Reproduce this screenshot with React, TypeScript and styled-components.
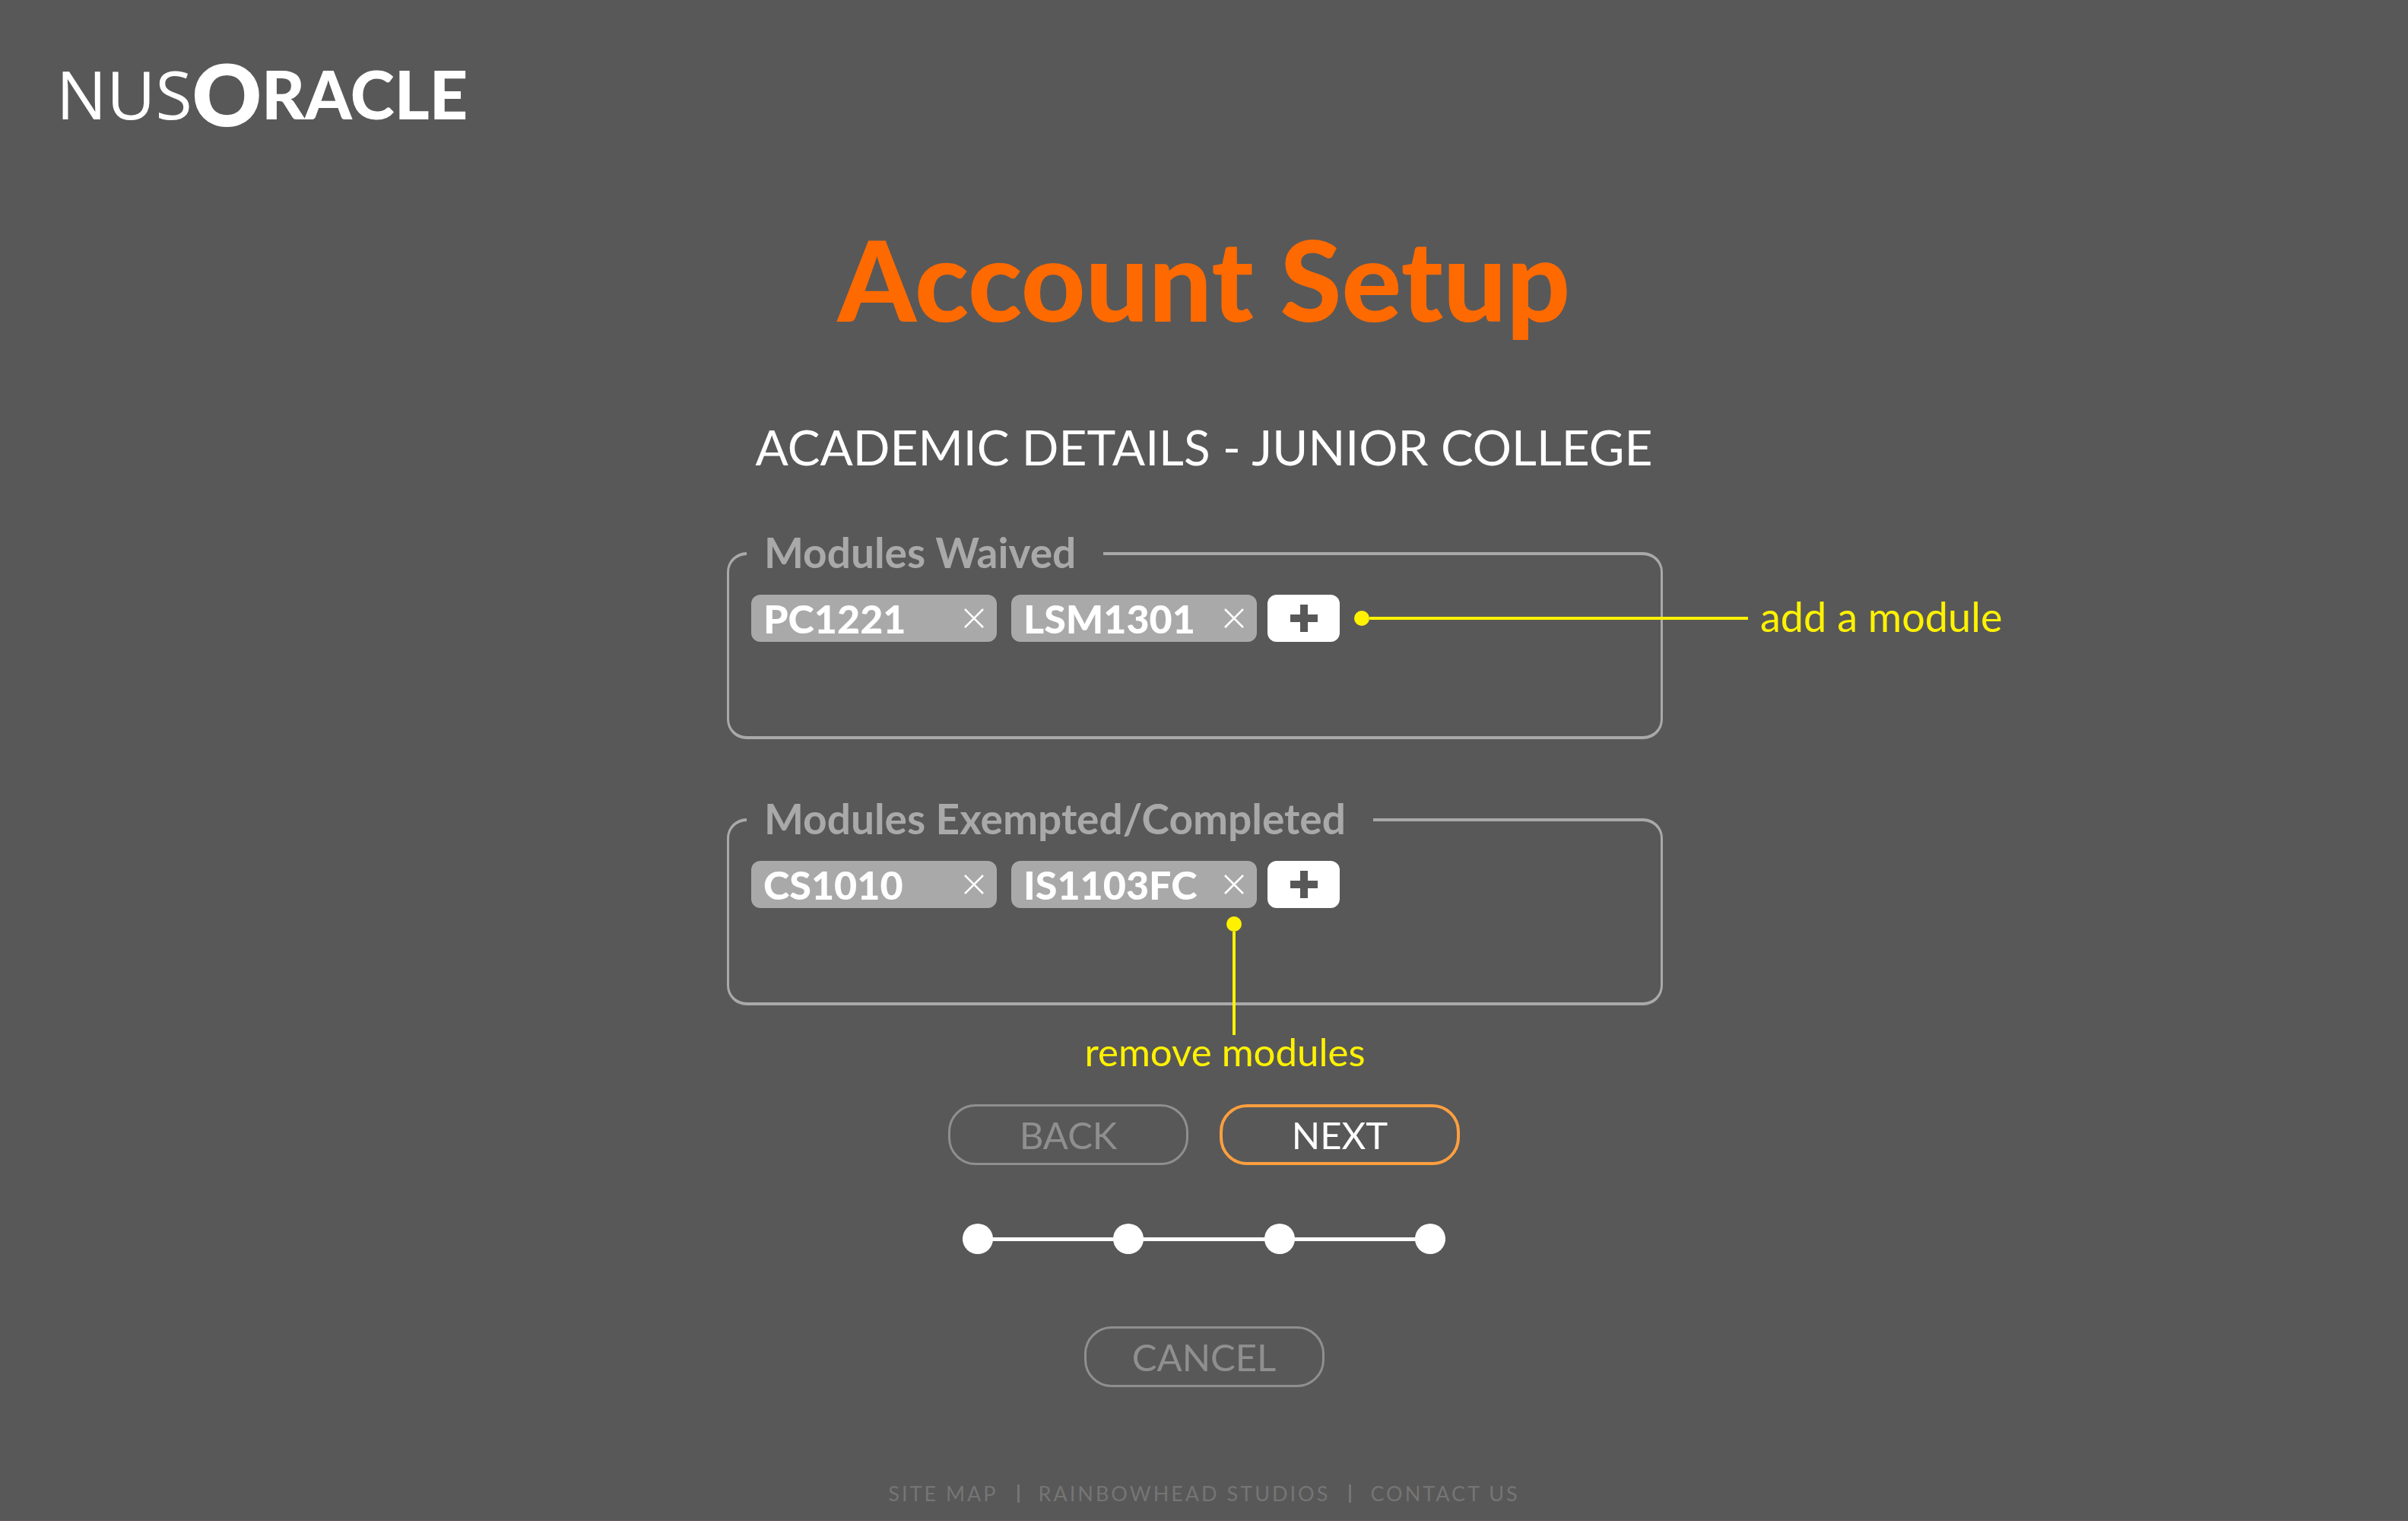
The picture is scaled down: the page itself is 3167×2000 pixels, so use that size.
import React, { useState } from "react";
import styled, { createGlobalStyle } from "styled-components";

const color = {
  page: "#585858",
  line: "#a9a9a9",
  muted: "#8f8f8f",
  footer: "#757575",
  brand: "#ff6a00",
  accent: "#ff9f3f",
  note: "#fff200",
};

const GlobalStyle = createGlobalStyle`
  *, *::before, *::after { box-sizing: border-box; }
  body {
    margin: 0;
    background: ${color.page};
    color: #fff;
    font-family: Lato, "Open Sans", sans-serif;
  }
  button { font-family: inherit; cursor: pointer; }
`;

const Page = styled.div`
  display: flex;
  flex-direction: column;
  min-height: 100vh;
  border-bottom: 1px solid #655b63;
`;

const Header = styled.header`
  padding: 66px 74px 0;
`;

const Logo = styled.a`
  display: inline-flex;
  align-items: center;
  height: 114px;
  color: #fff;
  line-height: 1;
  text-decoration: none;
`;

const LogoLight = styled.span`
  font: 400 88px/1 "Open Sans", sans-serif;
`;

const LogoRing = styled.span`
  font-size: 112px;
  font-weight: 800;
`;

const LogoHeavy = styled.span`
  font-size: 88px;
  font-weight: 900;
`;

const Main = styled.main`
  display: flex;
  flex-direction: column;
  align-items: center;
`;

const Title = styled.h1`
  margin: 98px 0 0;
  color: ${color.brand};
  font-size: 147px;
  font-weight: 900;
  line-height: 176px;
`;

const Subtitle = styled.h2`
  margin: 96px 0 0;
  font-size: 64px;
  font-weight: 400;
  line-height: 76px;
`;

const Fields = styled.div`
  display: flex;
  flex-direction: column;
  gap: 71px;
  width: min(1231px, 100%);
  margin: 67px 24px 0 0;
`;

const Field = styled.fieldset`
  min-width: 0;
  min-height: 279px;
  margin: 0;
  padding: 19px 29px;
  border: solid ${color.line};
  border-width: 4px 3px;
  border-radius: 26px;
`;

const Legend = styled.legend`
  margin-left: -6px;
  padding: 0 36px 4px 23px;
  color: ${color.line};
  font-size: 55px;
  font-weight: 700;
  line-height: 66px;
`;

const Chips = styled.ul`
  display: flex;
  gap: 19px;
  margin: 0;
  padding: 0;
  list-style: none;
`;

const Chip = styled.li`
  display: flex;
  align-items: center;
  justify-content: space-between;
  width: 323px;
  height: 62px;
  padding: 0 12px 0 16px;
  border-radius: 12px;
  background: ${color.line};
  font-size: 52px;
  font-weight: 900;
  line-height: 62px;
`;

const AddItem = styled.li`
  position: relative;
  margin-left: -5px;
`;

const IconButton = styled.button`
  position: relative;
  display: grid;
  place-items: center;
  width: 36px;
  height: 62px;
  padding: 0;
  border: 0;
  background: none;
  color: #fff;
`;

const AddButton = styled(IconButton)`
  width: 95px;
  border-radius: 12px;
  background: #fff;
  color: ${color.page};
`;

const NoteDot = styled.span`
  flex: none;
  width: 20px;
  height: 20px;
  border-radius: 50%;
  background: ${color.note};
`;

const SideNote = styled.div`
  position: absolute;
  top: 0;
  left: 100%;
  display: flex;
  align-items: center;
  height: 62px;
  margin-left: 19px;
  color: ${color.note};
  font-size: 54px;
  white-space: nowrap;
  pointer-events: none;
`;

const SideLine = styled.span`
  width: 498px;
  height: 4px;
  margin-right: 16px;
  background: ${color.note};
`;

const SideText = styled.span`
  padding-bottom: 6px;
`;

const BelowNote = styled.div`
  position: absolute;
  top: 100%;
  left: 50%;
  display: flex;
  flex-direction: column;
  align-items: center;
  margin-top: 11px;
  transform: translateX(-50%);
  color: ${color.note};
  font-size: 51px;
  font-weight: 400;
  line-height: 60px;
  white-space: nowrap;
  pointer-events: none;
`;

const BelowLine = styled.span`
  width: 4px;
  height: 136px;
  margin-bottom: -8px;
  background: ${color.note};
`;

const BelowText = styled.span`
  width: 0;
  display: flex;
  justify-content: center;
  padding-right: 24px;
`;

const Actions = styled.div`
  display: flex;
  gap: 41px;
  margin-top: 130px;
`;

const PillButton = styled.button<{ $primary?: boolean }>`
  width: 316px;
  height: 80px;
  padding: 0;
  border: ${(p) => (p.$primary ? `4px solid ${color.accent}` : `3px solid ${color.muted}`)};
  border-radius: 36px;
  background: none;
  color: ${(p) => (p.$primary ? "#fff" : color.muted)};
  font-size: 49px;
  line-height: 60px;
`;

const Steps = styled.ol`
  display: flex;
  align-items: center;
  justify-content: space-between;
  width: 635px;
  margin: 77px 0 95px;
  padding: 0;
  list-style: none;
  background: linear-gradient(#fff, #fff) center / 100% 5px no-repeat;
`;

const Step = styled.li`
  width: 40px;
  height: 40px;
  border-radius: 50%;
  background: #fff;
`;

const Footer = styled.footer`
  display: flex;
  align-items: center;
  justify-content: center;
  gap: 25px;
  margin-top: auto;
  padding-bottom: 17px;
`;

const FooterLink = styled.a`
  color: ${color.footer};
  font-size: 27px;
  letter-spacing: 3px;
  line-height: 36px;
  text-decoration: none;
`;

const Divider = styled.span`
  width: 3px;
  height: 24px;
  background: ${color.footer};
`;

const Cross = () => (
  <svg width="26" height="26" viewBox="0 0 26 26" aria-hidden="true">
    <path d="M1 1 25 25M25 1 1 25" stroke="currentColor" strokeWidth="2.5" />
  </svg>
);

const Plus = () => (
  <svg width="36" height="36" viewBox="0 0 36 36" aria-hidden="true">
    <path d="M18 0V36M0 18H36" stroke="currentColor" strokeWidth="10" />
  </svg>
);

interface ModuleFieldProps {
  label: string;
  initial: string[];
  addNote?: string;
  removeNote?: string;
}

function ModuleField({ label, initial, addNote, removeNote }: ModuleFieldProps) {
  const [modules, setModules] = useState(initial);
  return (
    <Field>
      <Legend>{label}</Legend>
      <Chips>
        {modules.map((code, i) => (
          <Chip key={code}>
            {code}
            <IconButton
              type="button"
              aria-label={`Remove ${code}`}
              onClick={() => setModules(modules.filter((m) => m !== code))}
            >
              <Cross />
              {removeNote && i === modules.length - 1 && (
                <BelowNote>
                  <NoteDot />
                  <BelowLine />
                  <BelowText>{removeNote}</BelowText>
                </BelowNote>
              )}
            </IconButton>
          </Chip>
        ))}
        <AddItem>
          <AddButton type="button" aria-label="Add a module">
            <Plus />
          </AddButton>
          {addNote && (
            <SideNote>
              <NoteDot />
              <SideLine />
              <SideText>{addNote}</SideText>
            </SideNote>
          )}
        </AddItem>
      </Chips>
    </Field>
  );
}

export default function App() {
  return (
    <Page>
      <GlobalStyle />
      <Header>
        <Logo href="#">
          <LogoLight>NUS</LogoLight>
          <LogoRing>O</LogoRing>
          <LogoHeavy>RACLE</LogoHeavy>
        </Logo>
      </Header>
      <Main>
        <Title>Account Setup</Title>
        <Subtitle>ACADEMIC DETAILS - JUNIOR COLLEGE</Subtitle>
        <Fields>
          <ModuleField label="Modules Waived" initial={["PC1221", "LSM1301"]} addNote="add a module" />
          <ModuleField
            label="Modules Exempted/Completed"
            initial={["CS1010", "IS1103FC"]}
            removeNote="remove modules"
          />
        </Fields>
        <Actions>
          <PillButton type="button">BACK</PillButton>
          <PillButton type="button" $primary>
            NEXT
          </PillButton>
        </Actions>
        <Steps aria-label="Setup progress">
          <Step />
          <Step />
          <Step />
          <Step />
        </Steps>
        <PillButton type="button">CANCEL</PillButton>
      </Main>
      <Footer>
        <FooterLink href="#">SITE MAP</FooterLink>
        <Divider />
        <FooterLink href="#">RAINBOWHEAD STUDIOS</FooterLink>
        <Divider />
        <FooterLink href="#">CONTACT US</FooterLink>
      </Footer>
    </Page>
  );
}
